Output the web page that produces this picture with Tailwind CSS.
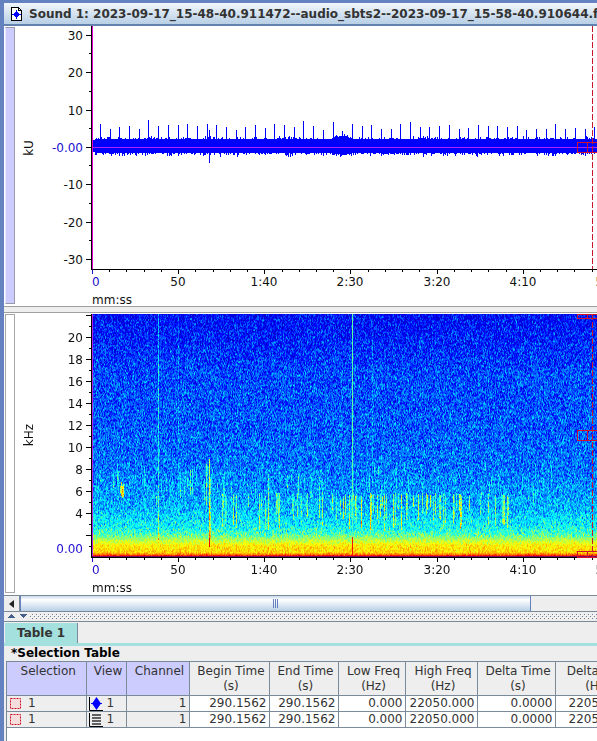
<!DOCTYPE html>
<html lang="en">

<head>
    <meta charset="UTF-8">
    <meta name="viewport" content="width=device-width, initial-scale=1.0">
    <title>Sound 1</title>
    <script src="https://cdn.jsdelivr.net/npm/@tailwindcss/browser@4"></script>
</head>

<body class="bg-[#6382bf] font-['DejaVu_Sans',sans-serif] text-xs text-[#333333] overflow-hidden">

    <div class="flex flex-col min-h-screen pl-1 pt-[3px]">

        <!-- Title bar -->
        <header class="flex items-center gap-[7px] h-[23px] pl-[7px] border-b-2 border-[#6382af] bg-linear-to-b from-[#f2f6fb] to-[#b8cfe5] overflow-hidden">
            <svg width="11" height="14" viewBox="0 0 11 14" class="shrink-0" shape-rendering="crispEdges">
                <path d="M.5.5H7.5L10.500 3.500V13.500H.5Z" fill="#fff" stroke="#000" />
                <path d="M7.500.5V3.500H10.500" fill="none" stroke="#000" />
                <path d="M5 3H6V5H7V6H8V7H10V8H8V9H7V10H6V12H5V10H4V9H3V8H1V7H3V6H4V5H5Z" fill="#00f" />
            </svg>
            <h1 class="font-bold whitespace-nowrap">Sound 1: 2023-09-17_15-48-40.911472--audio_sbts2--2023-09-17_15-58-40.910644.fl</h1>
        </header>

        <!-- Waveform view -->
        <section class="flex h-[280px] bg-white">
            <div class="shrink-0 w-[10px] ml-px mt-px mb-[2px] bg-[#ccccff] border border-[#9a9aad] border-l-[#e8e8ff]"></div>
            <svg id="waveform" class="grow h-full w-0 text-xs" fill="#111"></svg>
        </section>

        <div class="h-[7px] bg-[#eeeeee] border-y border-[#a0a0a0]"></div>

        <!-- Spectrogram view -->
        <section class="flex h-[282px] bg-white">
            <div class="shrink-0 w-[10px] ml-px mt-px mb-[2px] bg-white border border-[#a8a8a8]"></div>
            <div class="grow grid w-0 overflow-hidden">
                <canvas id="spectrogram" class="col-start-1 row-start-1 mt-px ml-[77px]"></canvas>
                <svg id="spectrogram-axes" class="col-start-1 row-start-1 w-full h-full text-xs" fill="#111"></svg>
            </div>
        </section>

        <!-- Horizontal scrollbar -->
        <div class="flex h-[17px] bg-[#eeeeee] border-y border-[#7a8a99]">
            <button type="button" aria-label="Scroll left" class="flex items-center justify-center w-4 border-r border-[#7a8a99]">
                <svg width="5" height="8" viewBox="0 0 5 8" fill="#222"><path d="M5 0V8L0 4Z" /></svg>
            </button>
            <div class="flex items-center justify-center gap-px w-[511px] bg-linear-to-b from-[#c8daeb] via-white via-25% to-[#b8cfe5] border-x border-[#6382bf]">
                <span class="w-px h-[9px] bg-[#6382bf]"></span>
                <span class="w-px h-[9px] bg-[#6382bf]"></span>
                <span class="w-px h-[9px] bg-[#6382bf]"></span>
            </div>
        </div>

        <!-- Split pane divider -->
        <svg class="block w-full h-[10px] bg-[#eeeeee] border-b border-[#7a8a99]" shape-rendering="crispEdges">
            <defs>
                <pattern id="bumps" width="4" height="4" patternUnits="userSpaceOnUse">
                    <path d="M0 2h1v1h-1zM2 0h1v1h-1z" fill="#76828f" />
                    <path d="M1 3h1v1h-1zM3 1h1v1h-1z" fill="#fff" />
                </pattern>
            </defs>
            <rect x="25" y="2" width="100%" height="5" fill="url(#bumps)" />
            <path d="M3 6h8L7 2zM15 2h8l-4 4z" fill="#44608a" />
        </svg>

        <!-- Selection table -->
        <section class="grow bg-[#eeeeee] flex flex-col">
            <div class="flex h-6 pt-px pl-px border-b-[3px] border-[#a3e0de]">
                <button type="button" class="px-3 bg-[#a3e0de] border-r border-[#7a8a99] font-bold">Table 1</button>
            </div>
            <h2 class="h-[15px] leading-[15px] pl-[7px] font-bold text-black">*Selection Table</h2>
            <div class="grow ml-[2px] bg-white border-l border-[#7a8a99] overflow-hidden">
                <table class="table-fixed w-[629px] border-collapse">
                    <thead>
                        <tr class="h-[34px] align-top text-center leading-[15px] bg-[#eeeeee] *:font-normal *:border *:border-l-0 *:border-[#7a8a99] *:p-0 *:pl-1 *:pt-[2px]">
                            <th class="w-[79px] bg-[#ccccff]">Selection</th>
                            <th class="w-[40px] bg-[#ccccff]">View</th>
                            <th class="w-[63px] bg-[#ccccff]">Channel</th>
                            <th class="w-[80px]">Begin Time<br>(s)</th>
                            <th class="w-[69px]">End Time<br>(s)</th>
                            <th class="w-[67px]">Low Freq<br>(Hz)</th>
                            <th class="w-[72px]">High Freq<br>(Hz)</th>
                            <th class="w-[78px]">Delta Time<br>(s)</th>
                            <th class="w-[81px]">Delta Freq<br>(Hz)</th>
                        </tr>
                    </thead>
                    <tbody class="text-right leading-[15px]">
                        <tr class="h-4 *:border *:border-l-0 *:border-[#7a8a99] *:py-0 *:pl-0 *:pr-[2px]">
                            <td class="bg-[#eeeeee]">
                                <div class="flex items-center gap-[7px] pl-[3px]">
                                    <svg width="11" height="11" viewBox="0 0 11 11"><path d="M.5.5h10v10h-10z" fill="#f6dede" stroke="#d01020" stroke-dasharray="2 1" /></svg>1
                                </div>
                            </td>
                            <td class="bg-[#eeeeee]">
                                <div class="flex items-center gap-1 pl-[2px]">
                                    <svg width="14" height="14" viewBox="0 0 14 14"><path d="M.5 0V13.500H14" fill="none" stroke="#000" /><path d="M2 6.500H13" stroke="#00f" /><path d="M7.500 0L12 6.500L7.500 13L3 6.500Z" fill="#00f" /></svg>1
                                </div>
                            </td>
                            <td class="bg-[#eeeeee]">1</td>
                            <td>290.1562</td>
                            <td>290.1562</td>
                            <td>0.000</td>
                            <td>22050.000</td>
                            <td>0.0000</td>
                            <td>22050.000</td>
                        </tr>
                        <tr class="h-4 *:border *:border-l-0 *:border-[#7a8a99] *:py-0 *:pl-0 *:pr-[2px]">
                            <td class="bg-[#eeeeee]">
                                <div class="flex items-center gap-[7px] pl-[3px]">
                                    <svg width="11" height="11" viewBox="0 0 11 11"><path d="M.5.5h10v10h-10z" fill="#f6dede" stroke="#d01020" stroke-dasharray="2 1" /></svg>1
                                </div>
                            </td>
                            <td class="bg-[#eeeeee]">
                                <div class="flex items-center gap-1 pl-[2px]">
                                    <svg width="14" height="14" viewBox="0 0 14 14"><path d="M.5 0V13.500H14" fill="none" stroke="#000" /><path d="M3 2H12M3 5H12M3 8H12M3 11H12" stroke="#333" stroke-width="1.600" /></svg>1
                                </div>
                            </td>
                            <td class="bg-[#eeeeee]">1</td>
                            <td>290.1562</td>
                            <td>290.1562</td>
                            <td>0.000</td>
                            <td>22050.000</td>
                            <td>0.0000</td>
                            <td>22050.000</td>
                        </tr>
                    </tbody>
                </table>
            </div>
        </section>
    </div>

    <script>
        // Left edge of the plots inside their svg
        const X0 = 77;
        const TIME_LABELS = ['0', '50', '1:40', '2:30', '3:20', '4:10', '5:00'];

        // Small seeded generator so that the noise is stable
        let seed = 7;
        function rand() {
            seed = (seed * 1664525 + 1013904223) % 4294967296;
            return seed / 4294967296;
        }

        function rect(x, y, w, h, fill) {
            return `<rect x="${x}" y="${y}" width="${w}" height="${h}" fill="${fill}"/>`;
        }

        function timeAxis(y) {
            let out = rect(X0 - 1, y, 2000, 1, '#000');
            for (let i = 0; i <= 30; i++) {
                const x = X0 + Math.round(i * 17.23);
                const major = i % 5 === 0;
                out += rect(x, y + 1, 1, major ? 4 : 2, i ? '#000' : '#2010d0');
                if (major) {
                    out += i
                        ? `<text x="${x}" y="${y + 17}" text-anchor="middle">${TIME_LABELS[i / 5]}</text>`
                        : `<text x="${x}" y="${y + 17}" fill="#2010d0">0</text>`;
                }
            }
            return out + `<text x="${X0}" y="${y + 35}">mm:ss</text>`;
        }

        function valueTick(y, major, label) {
            let out = rect(major ? X0 - 6 : X0 - 3, y, major ? 6 : 3, 1, '#000');
            if (label) out += `<text x="${X0 - 9}" y="${y + 5}" text-anchor="end">${label}</text>`;
            return out;
        }

        function cursor(y1, y2) {
            return `<path d="M577.500 ${y1}V${y2}" stroke="#c81830" stroke-dasharray="6 2"/>`;
        }

        function handle(y, h) {
            const red = '#d01030';
            return rect(562, y, 30, 1, red) + rect(562, y + h - 1, 30, 1, red)
                + rect(562, y, 1, h, red) + rect(572, y, 1, h, red);
        }

        // Waveform
        const spikes = [124,129,127,126,129,120,126,125,125,124,126,124,125,127,130,127,125,128,124,125,127,121,126,130,122,131,124,126,125,129,129,124,122,127,127,126,125,129,128,125,126,126,127,126,130,129,129,124,129,128,129,127];
        function drawWaveform() {
            let out = '';
            for (let v = -30; v <= 30; v += 10) {
                const y = Math.round(121 - v * 3.73);
                out += v ? valueTick(y, true, v)
                    : valueTick(y, true) + `<text x="${X0 - 9}" y="${y + 5}" text-anchor="end" fill="#2010d0">-0.00</text>`;
                if (v < 30) out += valueTick(y - 19, false);
            }
            let bars = '';
            for (let i = 0; i < 520; i++) {
                const swell = Math.max(0, 3 - Math.abs(i - 250) / 4);
                let top = 113 - Math.floor(rand() * rand() * 4) - Math.round(swell);
                let bottom = 127 + Math.floor(rand() * rand() * 5) + Math.round(swell / 2);
                if (i < 3) { top = 114; bottom = 126; }
                if (i === 117) { top = 104; bottom = 137; }
                bars += `M${X0 + i} ${top}h1V${bottom}h-1z`;
            }
            spikes.forEach((top, i) => {
                bars += `M${X0 + 8 + Math.round(i * 9.69)} ${top - 26}h1V120h-1z`;
            });
            out += `<path d="${bars}" fill="#0000ff"/>` + rect(X0, 121, 2000, 1, '#b020ff');
            out += rect(X0 - 1, 0, 1, 243, '#000') + rect(X0, 0, 1, 243, '#e000d0');
            out += timeAxis(243) + handle(116, 11) + cursor(0, 243);
            out += '<text transform="translate(18 122) rotate(-90)" text-anchor="middle">kU</text>';
            document.getElementById('waveform').innerHTML = `<g shape-rendering="crispEdges">${out}</g>`;
        }

        function drawSpectrogramAxes() {
            let out = '';
            for (let k = 1; k <= 22; k++) {
                const y = 244 - k * 11;
                out += valueTick(y, k % 2 === 0, k % 2 === 0 && k > 2 && k < 22 ? k : '');
            }
            out += `<text x="${X0 - 9}" y="240" text-anchor="end" fill="#2010d0">0.00</text>`;
            out += rect(X0 - 1, 1, 1, 243, '#000') + rect(X0, 1, 1, 243, '#b020e8');
            out += rect(X0, 243, 2000, 1, '#800060');
            out += timeAxis(244) + handle(1, 5) + handle(117, 11) + handle(238, 7) + cursor(1, 244);
            out += '<text transform="translate(18 122) rotate(-90)" text-anchor="middle">kHz</text>';
            document.getElementById('spectrogram-axes').innerHTML = `<g shape-rendering="crispEdges">${out}</g>`;
        }

        // Mean level against the row of the spectrogram
        const profile = [[0, .13], [25, .155], [60, .195], [120, .215], [155, .24], [180, .275], [200, .325], [213, .38], [220, .45], [226, .56], [231, .64], [238, .67], [240, .76], [242, .92]];
        function level(y) {
            for (let i = 1; i < profile.length; i++) {
                if (y <= profile[i][0]) {
                    const [y1, v1] = profile[i - 1];
                    const [y2, v2] = profile[i];
                    return v1 + (v2 - v1) * (y - y1) / (y2 - y1);
                }
            }
            return .92;
        }

        const channel = (v, centre) => Math.max(0, Math.min(1, 1.5 - Math.abs(4 * v - centre))) * 255;

        function drawSpectrogram() {
            const canvas = document.getElementById('spectrogram');
            const w = Math.max(520, canvas.parentElement.clientWidth - X0);
            const h = 243;
            canvas.width = w;
            canvas.height = h;
            const ctx = canvas.getContext('2d');
            const image = ctx.createImageData(w, h);

            // Calls: [x, first row, last row, strength]
            const calls = [[66, 0, 225, .17], [86, 0, 190, .06], [260, 0, 222, .24], [280, 20, 190, .07],
                [117, 145, 232, .3], [118, 165, 225, .17], [114, 150, 190, .2], [29, 168, 181, .35], [30, 172, 183, .42], [31, 170, 182, .35], [28, 172, 178, .3],
                [98, 155, 180, .2], [100, 155, 180, .18], [88, 155, 183, .16], [64, 182, 190, .18], [176, 160, 215, .2]];
            for (let i = 0; i < 95; i++) {
                const x = 118 + Math.floor(rand() * 300);
                const far = x > 220 && x < 390;
                calls.push([x, 179 + Math.floor(rand() * 4), 192 + Math.floor(rand() * 25), far ? .12 + rand() * .16 : .08 + rand() * .12]);
            }
            for (let i = 0; i < 70; i++) {
                const y = 148 + Math.floor(rand() * 25);
                calls.push([Math.floor(rand() * 460), y, y + 8 + Math.floor(rand() * 16), .05 + rand() * .09]);
            }
            const boost = new Float32Array(w * h);
            calls.forEach(([x, from, to, strength]) => {
                for (let y = from; y <= to; y++) boost[y * w + x] = Math.max(boost[y * w + x], strength);
            });

            for (let x = 0; x < w; x++) {
                let last = 0;
                for (let y = 0; y < h; y++) {
                    const n = rand() + rand() + rand() - 1.5;
                    const noise = n * .75 + last * .5;
                    last = n;
                    const spread = y > 222 ? .07 : .125;
                    let v = level(y) + noise * spread + boost[y * w + x] * (.75 + rand() * .5);
                    if (x === 260 && y > 222) v = .86;
                    if (x === 260 && y <= 222) v = .42 + rand() * .08;
                    v = Math.max(.08, Math.min(.93, v));
                    const p = (y * w + x) * 4;
                    image.data[p] = channel(v, 3);
                    image.data[p + 1] = channel(v, 2);
                    image.data[p + 2] = channel(v, 1);
                    image.data[p + 3] = 255;
                }
            }
            ctx.putImageData(image, 0, 0);
        }

        drawWaveform();
        drawSpectrogramAxes();
        drawSpectrogram();
    </script>

</body>

</html>
